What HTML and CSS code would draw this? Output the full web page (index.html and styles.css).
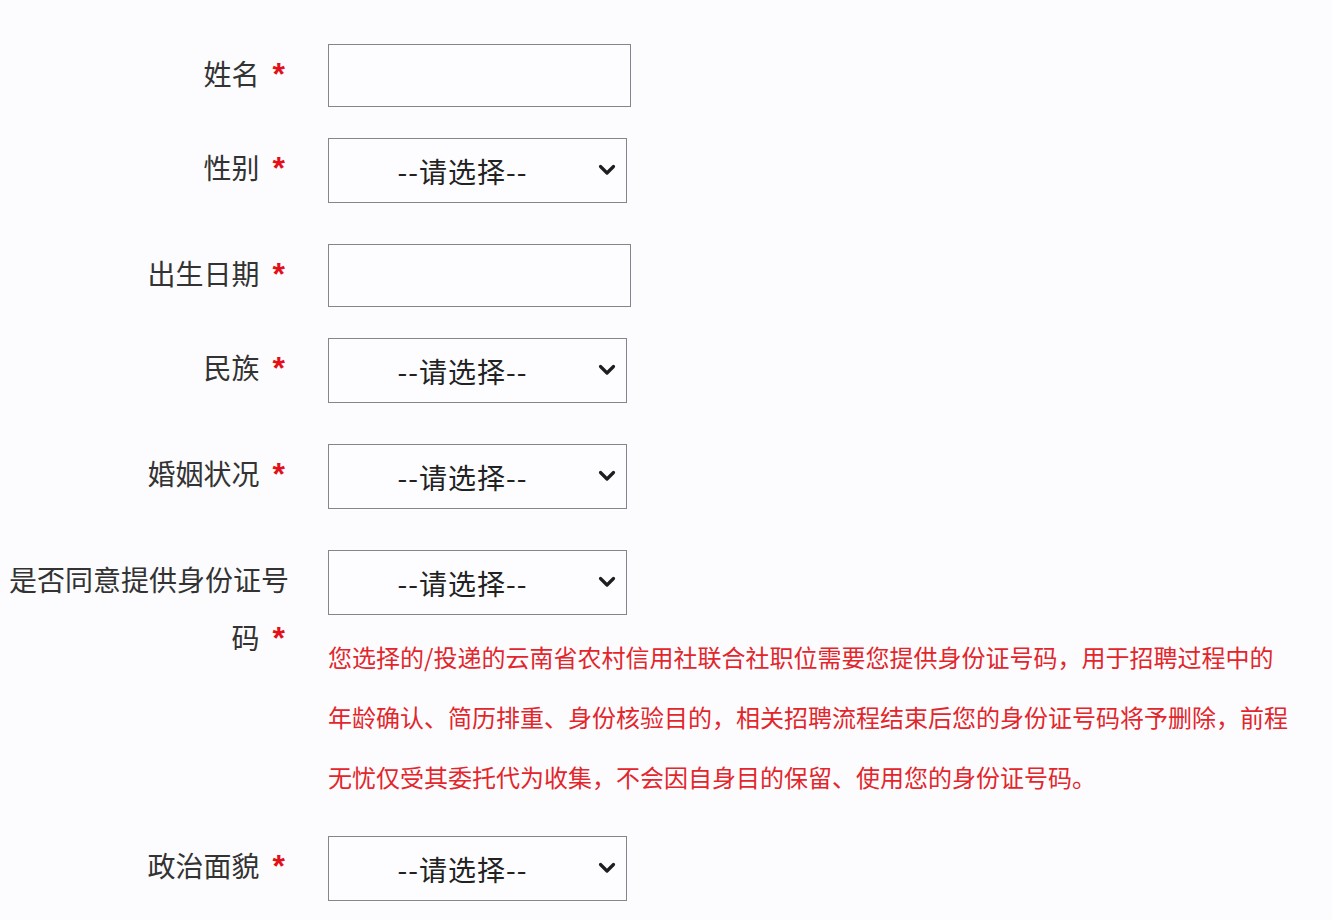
FILE: index.html
```html
<!DOCTYPE html>
<html lang="zh-CN">
<head>
  <meta charset="UTF-8">
  <meta name="viewport" content="width=device-width, initial-scale=1.0">
  <title>基本信息</title>
  <link rel="stylesheet" href="styles.css">
</head>
<body>
  <div class="form">
    <!-- 姓名 -->
    <div class="row row-input">
      <label class="label">姓名<span class="req">*</span></label>
      <div class="field">
        <input type="text" class="text-input">
      </div>
    </div>

    <div class="row row-select">
      <label class="label">性别<span class="req">*</span></label>
      <div class="field">
        <div class="select-wrap">
          <select class="select">
            <option>--请选择--</option>
            <option>男</option>
            <option>女</option>
          </select>
          <svg class="arrow" viewBox="0 0 18 12" width="18" height="12"><path d="M2.5 2.5 L9 9 L15.5 2.5" fill="none" stroke="#1e1e22" stroke-width="3.2" stroke-linecap="round" stroke-linejoin="round"/></svg>
        </div>
      </div>
    </div>

    <div class="row row-input">
      <label class="label">出生日期<span class="req">*</span></label>
      <div class="field">
        <input type="text" class="text-input">
      </div>
    </div>

    <div class="row row-select">
      <label class="label">民族<span class="req">*</span></label>
      <div class="field">
        <div class="select-wrap">
          <select class="select">
            <option>--请选择--</option>
            <option>汉族</option>
          </select>
          <svg class="arrow" viewBox="0 0 18 12" width="18" height="12"><path d="M2.5 2.5 L9 9 L15.5 2.5" fill="none" stroke="#1e1e22" stroke-width="3.2" stroke-linecap="round" stroke-linejoin="round"/></svg>
        </div>
      </div>
    </div>

    <div class="row row-select">
      <label class="label">婚姻状况<span class="req">*</span></label>
      <div class="field">
        <div class="select-wrap">
          <select class="select">
            <option>--请选择--</option>
            <option>未婚</option>
            <option>已婚</option>
          </select>
          <svg class="arrow" viewBox="0 0 18 12" width="18" height="12"><path d="M2.5 2.5 L9 9 L15.5 2.5" fill="none" stroke="#1e1e22" stroke-width="3.2" stroke-linecap="round" stroke-linejoin="round"/></svg>
        </div>
      </div>
    </div>

    <!-- 身份证号码 -->
    <div class="row row-note">
      <label class="label">是否同意提供身份证号<br>码<span class="req">*</span></label>
      <div class="field">
        <div class="select-wrap">
          <select class="select">
            <option>--请选择--</option>
            <option>同意</option>
            <option>不同意</option>
          </select>
          <svg class="arrow" viewBox="0 0 18 12" width="18" height="12"><path d="M2.5 2.5 L9 9 L15.5 2.5" fill="none" stroke="#1e1e22" stroke-width="3.2" stroke-linecap="round" stroke-linejoin="round"/></svg>
        </div>
        <p class="note">您选择的/投递的云南省农村信用社联合社职位需要您提供身份证号码，用于招聘过程中的年龄确认、简历排重、身份核验目的，相关招聘流程结束后您的身份证号码将予删除，前程无忧仅受其委托代为收集，不会因自身目的保留、使用您的身份证号码。</p>
      </div>
    </div>

    <div class="row row-select">
      <label class="label">政治面貌<span class="req">*</span></label>
      <div class="field">
        <div class="select-wrap">
          <select class="select">
            <option>--请选择--</option>
            <option>群众</option>
          </select>
          <svg class="arrow" viewBox="0 0 18 12" width="18" height="12"><path d="M2.5 2.5 L9 9 L15.5 2.5" fill="none" stroke="#1e1e22" stroke-width="3.2" stroke-linecap="round" stroke-linejoin="round"/></svg>
        </div>
      </div>
    </div>
  </div>
</body>
</html>
```

FILE: styles.css
```css
* {
  margin: 0;
  padding: 0;
  box-sizing: border-box;
}

body {
  background-color: #fcfcfe;
  color: #333;
  font-family: "Noto Sans CJK SC", "Noto Sans", sans-serif;
}

.form {
  padding: 44px 40px 0 8px;
}

.row {
  display: flex;
  align-items: flex-start;
}

.row-input {
  margin-bottom: 31px;
}

.row-select {
  margin-bottom: 41px;
}

.row-note {
  margin-bottom: 29px;
}

.label {
  width: 281px;
  flex-shrink: 0;
  text-align: right;
  font-size: 28px;
  line-height: 58px;
  color: #333;
}

.req {
  font-family: "Liberation Sans", Arial, sans-serif;
  font-weight: bold;
  font-size: 32px;
  line-height: 1;
  color: #e3101a;
  margin-left: 13px;
  margin-right: 4px;
}

.field {
  margin-left: 39px;
  flex: 1;
}

.text-input {
  display: block;
  width: 303px;
  height: 63px;
  border: 1.5px solid #85858e;
  background-color: #fdfdff;
  font-size: 26px;
  padding: 0 10px;
}

.select-wrap {
  position: relative;
  width: 299px;
  height: 65px;
}

.select {
  appearance: none;
  -webkit-appearance: none;
  display: block;
  width: 299px;
  height: 65px;
  border: 1.5px solid #85858e;
  border-radius: 0;
  background-color: #fdfdff;
  font-family: "Noto Sans CJK SC", "Noto Sans", sans-serif;
  font-size: 28px;
  letter-spacing: 1px;
  color: #222;
  text-align: center;
  text-align-last: center;
  padding: 0 30px 0 0;
}

.arrow {
  position: absolute;
  right: 11px;
  top: 26px;
  pointer-events: none;
}

.note {
  margin-top: 12px;
  max-width: 964px;
  font-size: 24px;
  line-height: 60px;
  color: #e2262c;
}
```
